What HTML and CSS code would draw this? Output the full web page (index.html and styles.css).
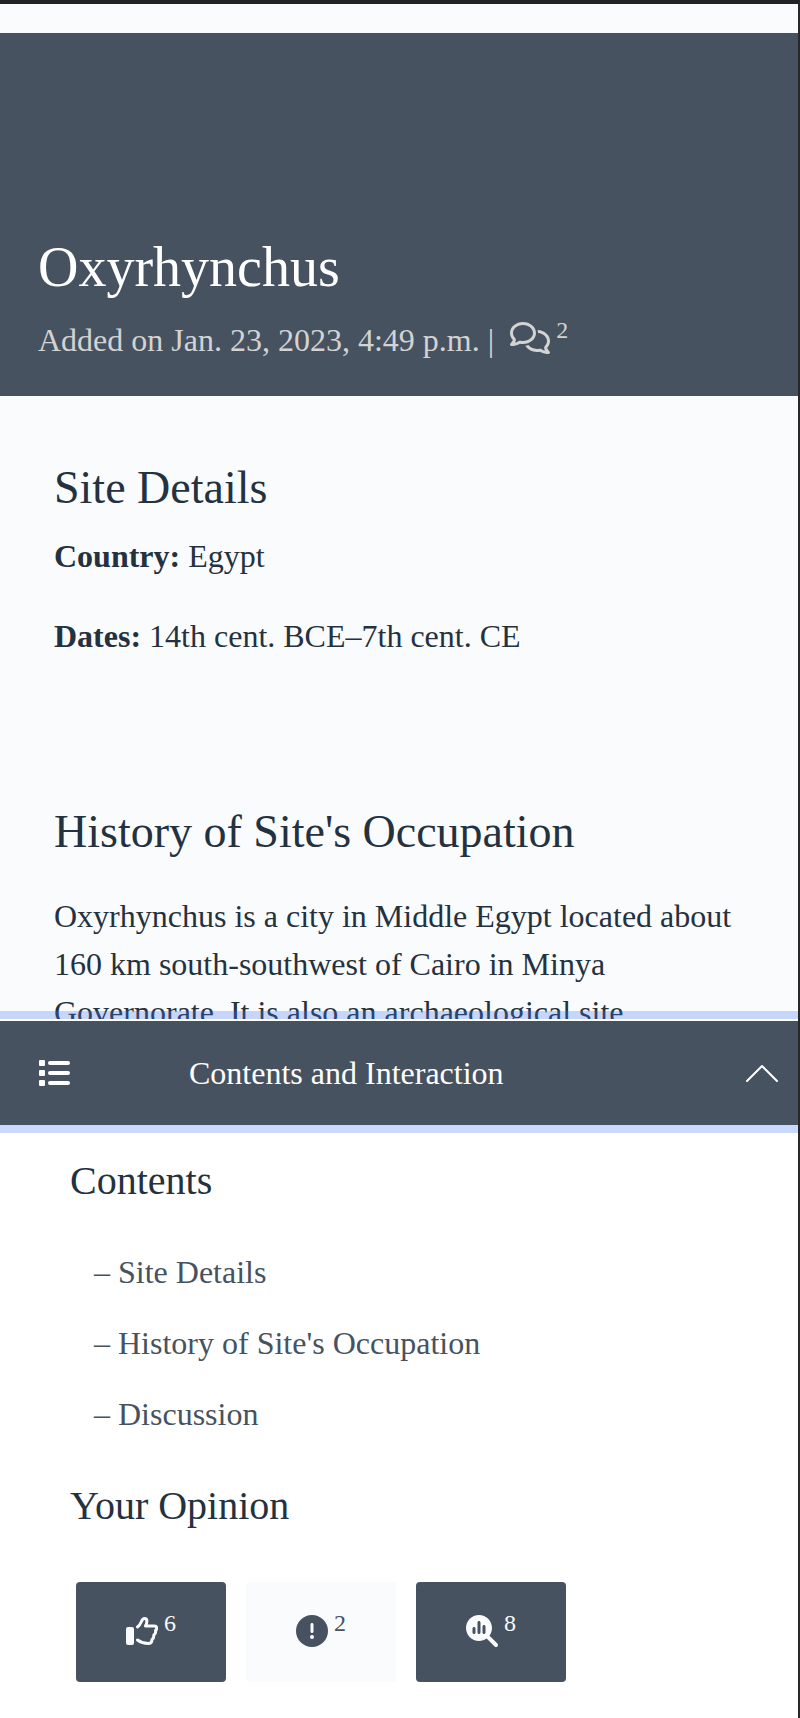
FILE: index.html
```html
<!DOCTYPE html>
<html lang="en">
<head>
<meta charset="utf-8">
<meta name="viewport" content="width=device-width, initial-scale=1">
<title>Oxyrhynchus</title>
<link rel="stylesheet" href="styles.css">
</head>
<body>
<div class="page">
  <main class="article">
    <header class="hero">
      <h1 class="hero-title">Oxyrhynchus</h1>
      <p class="hero-meta">
        <span>Added on Jan. 23, 2023, 4:49 p.m. |</span>
        <a class="comments" href="#discussion" aria-label="2 comments">
          <svg class="comments-icon" viewBox="0 0 640 512" aria-hidden="true"><path fill="currentColor" d="M88.2 309.1c9.8-18.3 6.8-40.8-7.5-55.8C59.4 230.9 48 204 48 176c0-63.5 63.8-128 160-128s160 64.5 160 128s-63.8 128-160 128c-13.1 0-25.8-1.3-37.8-3.6c-10.4-2-21.2-.6-30.7 4.2c-4.1 2.1-8.3 4.1-12.6 6c-16 7.2-32.9 13.5-49.9 18c2.8-4.6 5.4-9.1 7.9-13.6c1.1-1.9 2.2-3.9 3.2-5.9zM0 176c0 41.8 17.2 80.1 45.9 110.3c-.9 1.7-1.9 3.5-2.8 5.1c-10.3 18.4-22.3 36.5-36.6 52.1c-6.6 7-8.3 17.2-4.6 25.9C5.8 378.3 14.4 384 24 384c43 0 86.5-13.3 122.7-29.7c4.8-2.2 9.6-4.5 14.2-6.8c15.1 3 30.9 4.5 47.1 4.5c114.9 0 208-78.8 208-176S322.9 0 208 0S0 78.8 0 176zM432 480c16.2 0 31.9-1.6 47.1-4.5c4.6 2.3 9.4 4.6 14.2 6.8C529.5 498.7 573 512 616 512c9.6 0 18.2-5.7 22-14.5c3.8-8.8 2-19-4.6-25.9c-14.2-15.6-26.2-33.7-36.6-52.1c-.9-1.7-1.9-3.4-2.8-5.1C622.8 384.1 640 345.8 640 304c0-94.4-87.9-171.5-198.2-175.8c4.1 15.2 6.2 31.2 6.2 47.8l0 .6c87.2 6.7 144 67.5 144 127.4c0 28-11.4 54.9-32.7 77.2c-14.3 15-17.3 37.6-7.5 55.8c1.1 2 2.2 4 3.2 5.9c2.5 4.5 5.2 9 7.9 13.6c-17-4.5-33.9-10.7-49.9-18c-4.3-1.9-8.5-3.9-12.6-6c-9.5-4.8-20.3-6.2-30.7-4.2c-12.1 2.4-24.7 3.6-37.8 3.6c-61.7 0-110-26.5-136.8-62.3c-16 5.4-32.8 9.4-50 11.8C279 439.8 350 480 432 480z"/></svg>
          <span class="count">2</span>
        </a>
      </p>
    </header>
    <section class="section" id="details">
      <h2 class="section-title">Site Details</h2>
      <p class="fact"><strong>Country:</strong> Egypt</p>
      <p class="fact"><strong>Dates:</strong> 14th cent. BCE–7th cent. CE</p>
    </section>
    <section class="section section-history" id="history">
      <h2 class="section-title">History of Site's Occupation</h2>
      <p class="prose">Oxyrhynchus is a city in Middle Egypt located about 160 km south-southwest of Cairo in Minya Governorate. It is also an archaeological site</p>
    </section>
  </main>
  <aside class="drawer">
    <button class="drawer-toggle" type="button" aria-expanded="true">
      <svg class="list-icon" viewBox="0 0 32 32" aria-hidden="true" fill="currentColor"><rect x="0" y="3" width="6" height="6" rx="1"/><rect x="0" y="13" width="6" height="6" rx="1"/><rect x="0" y="23" width="6" height="6" rx="1"/><rect x="9" y="4" width="22" height="4" rx="2"/><rect x="9" y="14" width="22" height="4" rx="2"/><rect x="9" y="24" width="22" height="4" rx="2"/></svg>
      <span class="drawer-label">Contents and Interaction</span>
      <svg class="chevron-icon" viewBox="0 0 32 18" aria-hidden="true" fill="none" stroke="currentColor" stroke-width="2" stroke-linecap="round" stroke-linejoin="round"><path d="M1 17 16 2 31 17"/></svg>
    </button>
    <div class="drawer-body">
      <h3 class="drawer-title">Contents</h3>
      <nav class="toc">
        <a href="#details">– Site Details</a>
        <a href="#history">– History of Site's Occupation</a>
        <a href="#discussion">– Discussion</a>
      </nav>
      <h3 class="drawer-title">Your Opinion</h3>
      <div class="votes">
        <button class="vote" type="button" aria-label="Agree, 6">
          <svg class="vote-icon" viewBox="0 0 32 32" aria-hidden="true"><rect x="0" y="12" width="8" height="18" rx="2" fill="currentColor"/><path d="M11.500 12C16 9 15 3.500 18.500 3.500 22 3.500 21 8 19.500 11H28.500C31 11 31.500 14 29.500 15.500 30 17.500 29.500 19 27.800 20 28 22 27.500 23.500 26 24.500 26 27 24.500 28.500 22 28.500 17.500 28.500 15.500 28 11.500 25" fill="none" stroke="currentColor" stroke-width="3" stroke-linecap="round" stroke-linejoin="round"/></svg>
          <span class="count">6</span>
        </button>
        <button class="vote vote-light" type="button" aria-label="Disputed, 2">
          <svg class="vote-icon" viewBox="0 0 512 512" aria-hidden="true"><path fill="currentColor" d="M256 512A256 256 0 1 0 256 0a256 256 0 1 0 0 512zm0-384c13.300 0 24 10.700 24 24V264c0 13.300-10.700 24-24 24s-24-10.700-24-24V152c0-13.300 10.700-24 24-24zM224 352a32 32 0 1 1 64 0 32 32 0 1 1 -64 0z"/></svg>
          <span class="count">2</span>
        </button>
        <button class="vote" type="button" aria-label="Needs research, 8">
          <svg class="vote-icon" viewBox="0 0 512 512" aria-hidden="true"><path fill="currentColor" d="M416 208c0 45.900-14.900 88.300-40 122.700L502.600 457.400c12.500 12.500 12.500 32.800 0 45.300s-32.800 12.500-45.300 0L330.700 376c-34.400 25.200-76.800 40-122.700 40C93.100 416 0 322.900 0 208S93.100 0 208 0S416 93.100 416 208zm-312 8v64c0 13.300 10.700 24 24 24s24-10.700 24-24V216c0-13.300-10.700-24-24-24s-24 10.700-24 24zm80-96V280c0 13.300 10.700 24 24 24s24-10.700 24-24V120c0-13.300-10.700-24-24-24s-24 10.700-24 24zm80 64v96c0 13.300 10.700 24 24 24s24-10.700 24-24V184c0-13.300-10.700-24-24-24s-24 10.700-24 24z"/></svg>
          <span class="count">8</span>
        </button>
      </div>
    </div>
  </aside>
</div>
</body>
</html>
```
FILE: styles.css
```css
* { box-sizing: border-box; }

body {
  margin: 0;
  background: #fff;
  color: #243240;
  font: 32px/48px "Liberation Serif", "Times New Roman", serif;
}

h1, h2, h3, p { margin: 0; font-weight: 400; }

svg { display: block; flex: none; }

a { color: inherit; text-decoration: none; }

button { border: 0; font: inherit; color: inherit; cursor: pointer; }

.page {
  display: flex;
  flex-direction: column;
  height: 100vh;
  border-top: 4px solid #222226;
  border-right: 2px solid #28282b;
}

.article {
  flex: 1;
  min-height: 0;
  overflow: hidden;
  padding-top: 29px;
  background: #fafbfd;
}

.hero {
  padding: 200px 38px 32px;
  background: #475260;
  color: #fff;
}

.hero-title { font-size: 56px; line-height: 68px; }

.hero-meta {
  display: flex;
  gap: 16px;
  margin-top: 15px;
  color: #d3d3d3;
}

.comments { display: flex; gap: 6px; }

.comments-icon { width: 40px; height: 32px; margin-top: 6px; }

.count { font-size: 24px; line-height: 28px; }

.section { padding: 64px 54px 0; }

.section-history { padding-top: 144px; }

.section-title { font-size: 46px; line-height: 56px; }

.fact { padding-top: 16px; }

.fact + .fact { padding-top: 32px; }

.prose { padding-top: 32px; }

.drawer { position: relative; }

.drawer-toggle {
  display: flex;
  align-items: center;
  width: 100%;
  height: 106px;
  padding: 0 20px 0 39px;
  border-top: 2px solid #fff;
  background: #475260;
  color: #fff;
  box-shadow: 0 -8px 0 rgba(64, 115, 245, 0.28), 0 8px 0 rgba(64, 115, 245, 0.28);
  text-align: left;
}

.list-icon { width: 32px; height: 32px; }

.drawer-label { flex: 1; padding-left: 118px; }

.chevron-icon { width: 32px; height: 18px; }

.drawer-body { padding: 32px 70px 36px; }

.drawer-title { font-size: 40px; line-height: 48px; }

.toc {
  display: flex;
  flex-direction: column;
  gap: 23px;
  padding: 43px 24px 44px;
  color: #475260;
}

.votes { display: flex; gap: 20px; padding: 52px 6px 0; }

.vote {
  display: flex;
  justify-content: center;
  gap: 6px;
  width: 150px;
  height: 100px;
  padding: 27px 0 0;
  border-radius: 4px;
  background: #475260;
  color: #fafbfd;
}

.vote-light { background: #fafbfd; color: #475260; }

.vote-icon { width: 32px; height: 32px; margin-top: 6px; }
```
